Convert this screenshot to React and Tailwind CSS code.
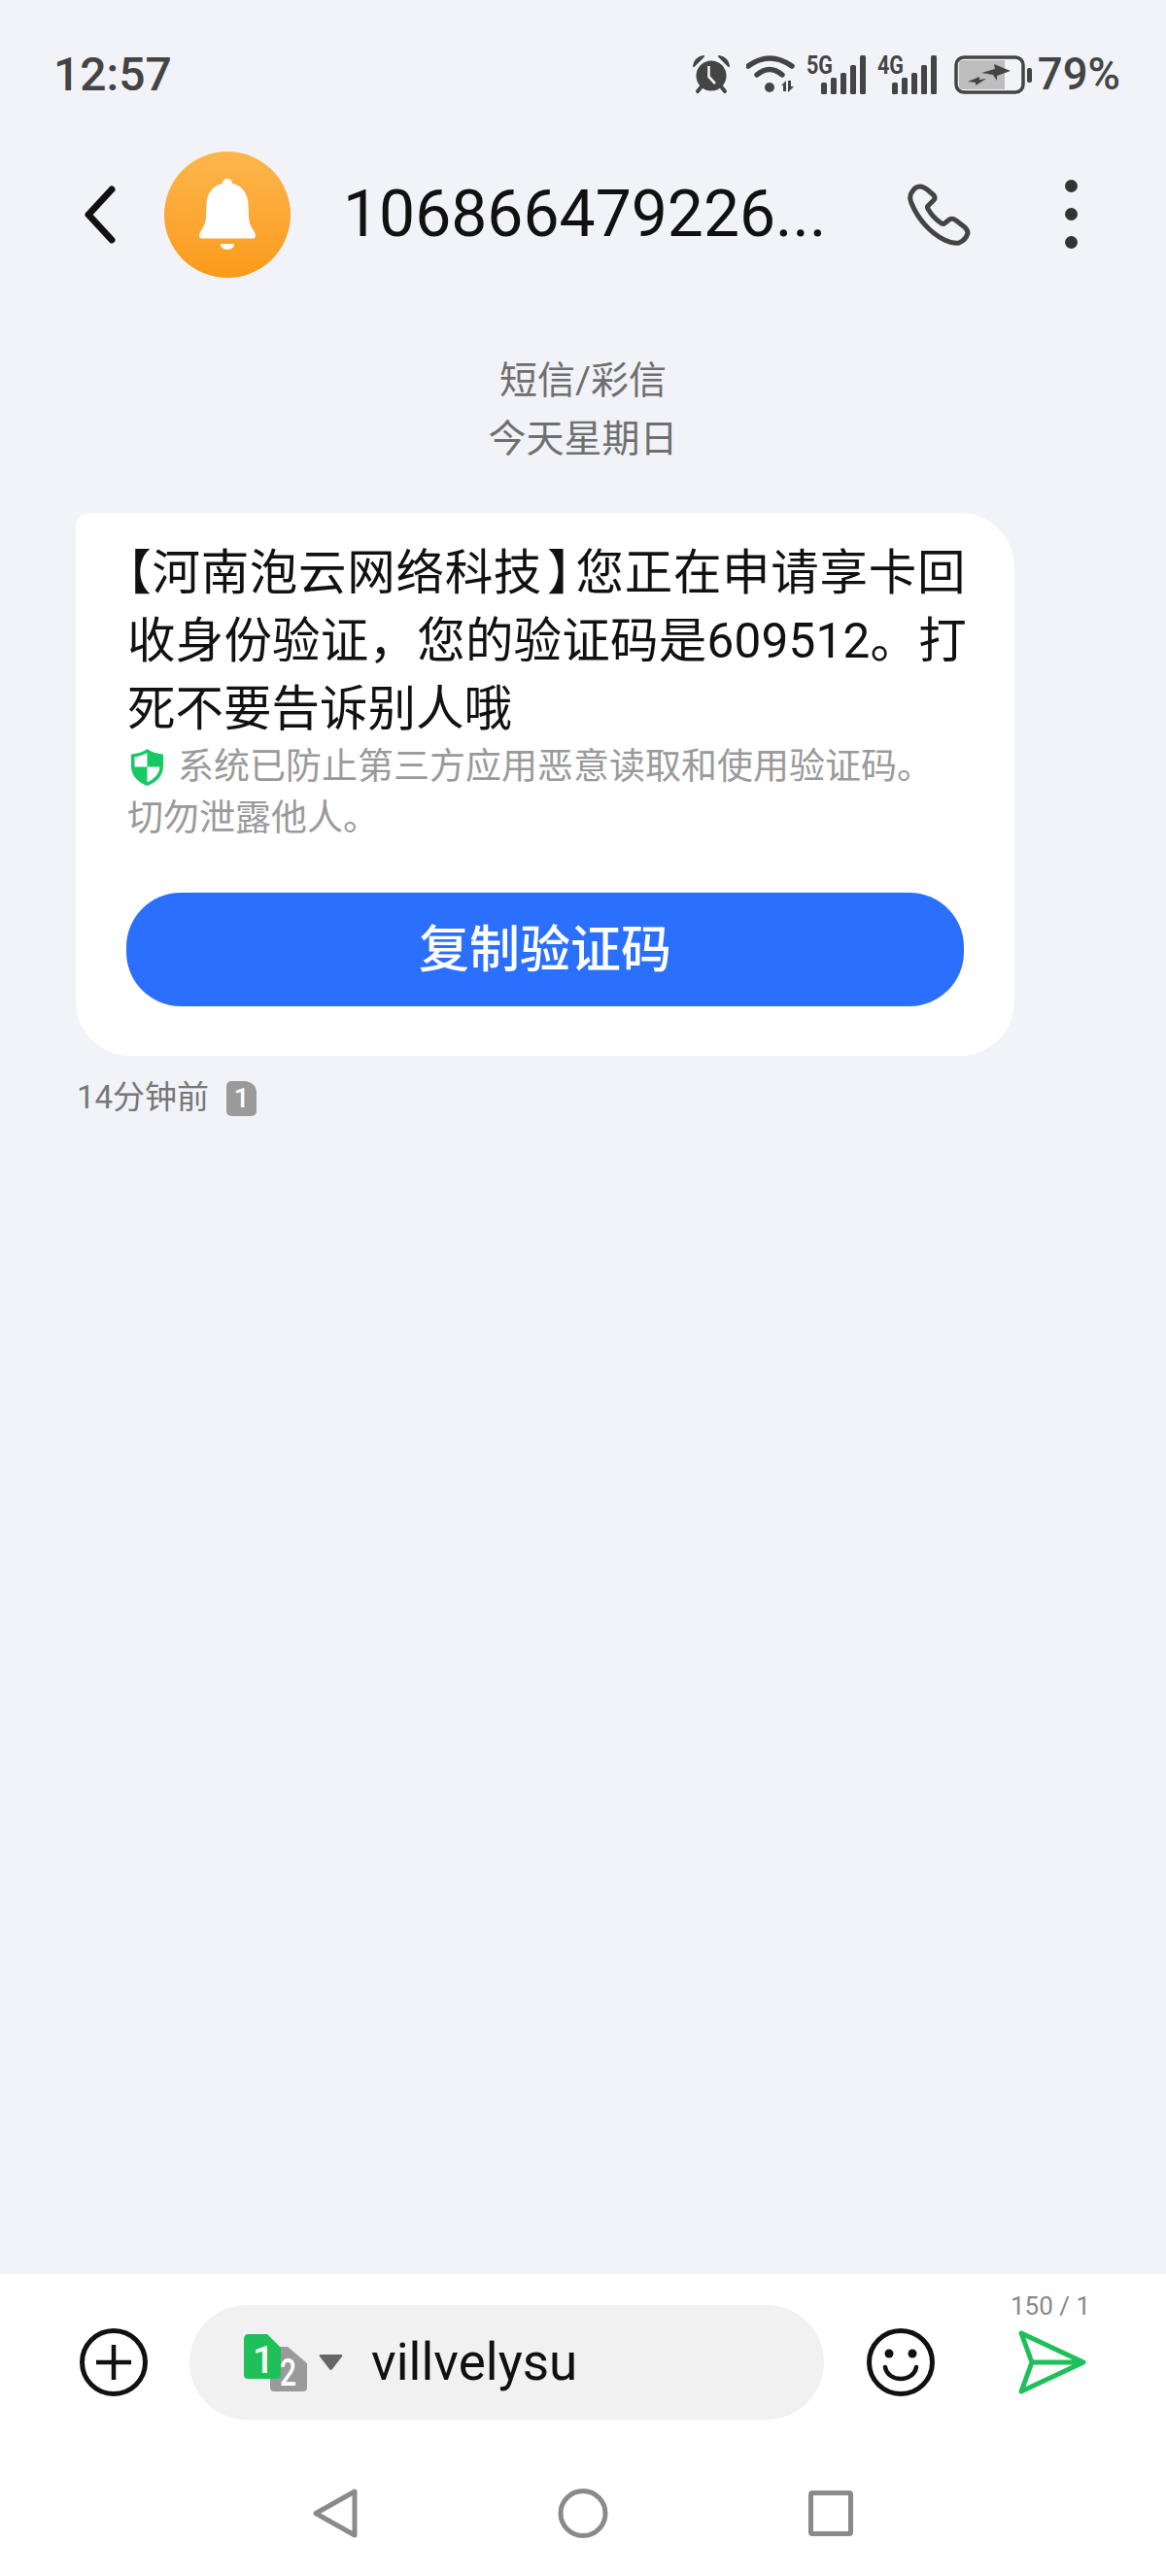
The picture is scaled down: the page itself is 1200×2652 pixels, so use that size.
import React from "react";

const cjk = "font-['Roboto','Noto_Sans_CJK_SC',sans-serif]";

function AlarmIcon() {
  return (
    <svg width="40" height="40" viewBox="0 0 40 40">
      <path d="M2 11 C3 5 7 2 12 1 Z M38 11 C37 5 33 2 28 1 Z" fill="#444" stroke="#444" strokeWidth="2" strokeLinejoin="round" />
      <circle cx="20" cy="21" r="15.5" fill="#444" />
      <path d="M6 37 L10 32 M34 37 L30 32" stroke="#444" strokeWidth="4" strokeLinecap="round" />
      <path d="M17.5 11 V22 L24 29" fill="none" stroke="#f1f3f8" strokeWidth="2.6" />
    </svg>
  );
}

function WifiIcon() {
  return (
    <svg width="51" height="40" viewBox="0 0 51 40">
      <path d="M2 11 Q24 -5 47 11" fill="none" stroke="#444" strokeWidth="5.5" strokeLinecap="round" />
      <path d="M11 20 Q24 9 37 20" fill="none" stroke="#444" strokeWidth="5.5" strokeLinecap="round" />
      <circle cx="24" cy="33" r="5" fill="#444" />
      <path d="M41 26 V37 H38 V31 H36 Z M43 26 H46 V32 H49 L43 38 Z" fill="#444" />
    </svg>
  );
}

function SignalIcon({ label }) {
  return (
    <svg width="62" height="40" viewBox="0 0 62 40" className="overflow-visible">
      <text x="0" y="19" fontFamily="Roboto" fontWeight="700" fontSize="26" fill="#444" textLength="27" lengthAdjust="spacingAndGlyphs">
        {label}
      </text>
      {[[15, 28], [25, 23], [35, 18], [45, 10], [55, 0]].map(([x, y]) => (
        <rect key={x} x={x} y={y} width="6" height={40 - y} rx="1.5" fill="#444" />
      ))}
    </svg>
  );
}

function BatteryIcon() {
  return (
    <svg width="80" height="40" viewBox="0 0 80 40">
      <path d="M8 5 H52 V35 H8 Q5 35 5 32 V8 Q5 5 8 5 Z" fill="#bdbdbd" />
      <rect x="2" y="2" width="69" height="36" rx="8" fill="none" stroke="#444" strokeWidth="3.5" />
      <rect x="75" y="13" width="5" height="15" rx="2" fill="#444" />
      <path d="M14 27 L26 22 L26 25 L33 24 L22 31 L22 28 Z" fill="#444" />
      <path d="M28 18 L42 14 L41 9 L58 16 L44 21 L44 26 L40 20 Z" fill="#444" />
    </svg>
  );
}

function BellIcon() {
  return (
    <svg width="58" height="73" viewBox="0 0 58 73">
      <path d="M29 0 C32 0 34 2 34 5 C44 7 50 15 50.5 26 L51 38 C51 46 54 50 57 55 C58.5 58 58 61.5 56 61.5 H2 C0 61.5 -0.5 58 1 55 C4 50 7 46 7 38 L7.5 26 C8 15 14 7 24 5 C24 2 26 0 29 0 Z" fill="#fff" />
      <path d="M22 67 H36 C36 71 33 73 29 73 C25 73 22 71 22 67 Z" fill="#fff" />
    </svg>
  );
}

function PhoneIcon() {
  return (
    <svg width="66" height="66" viewBox="0 0 66 66">
      <path
        d="M13 4 Q8 4 5 9 Q1 14 4 21 C10 36 22 51 38 59 Q46 63 53 62 Q60 59 62 52 Q62 49 59 46 L50 39 Q46 36 43 38 L38 42 Q37 43 35 42 Q26 36 21 27 Q20 25 21 24 L27 18 Q29 16 27 13 L20 7 Q16 4 13 4 Z"
        fill="none"
        stroke="#444"
        strokeWidth="5"
        strokeLinejoin="round"
      />
    </svg>
  );
}

function ShieldIcon() {
  return (
    <svg width="33" height="38" viewBox="0 0 33 38" className="inline-block ml-[4px] mr-[15px] align-[-7px]">
      <path d="M16.5 0 C20 3 27 5 33 5.5 V18 C33 28 25 35 16.5 38 C8 35 0 28 0 18 V5.5 C6 5 13 3 16.5 0 Z" fill="#17c964" />
      <path d="M16.5 4 C13 6 8 8 3.5 8.5 V18.5 H16.5 Z M16.5 18.5 H29.5 C29 26 23 31.5 16.5 34.5 Z" fill="#fff" />
    </svg>
  );
}

function SimIcon() {
  return (
    <svg width="65" height="59" viewBox="0 0 65 59" className="overflow-visible">
      <path d="M30 13 H45 L65 30 V55 Q65 59 61 59 H31 Q27 59 27 55 V17 Z" fill="#9a9a9a" />
      <path d="M5 0 H24 L38 14 V42 Q38 46 34 46 H4 Q0 46 0 42 V5 Q0 0 5 0 Z" fill="#1fbf5a" />
      <text x="9" y="40" fontFamily="Roboto" fontWeight="500" fontSize="39" fill="#fff">1</text>
      <text x="37" y="53" fontFamily="Roboto" fontWeight="500" fontSize="38" fill="#fff" textLength="17" lengthAdjust="spacingAndGlyphs">2</text>
    </svg>
  );
}

export default function App() {
  return (
    <div className={`w-[1200px] h-[2652px] flex flex-col bg-[#f1f3f8] ${cjk}`}>
      {/* Status bar */}
      <div className="flex items-center justify-between h-[44px] mt-[55px] pl-[55px] pr-[47px]">
        <span className="text-[48px] font-medium leading-none text-[#444]">12:57</span>
        <div className="flex items-center">
          <AlarmIcon />
          <div className="ml-[16px]"><WifiIcon /></div>
          <div className="ml-[11px]"><SignalIcon label="5G" /></div>
          <div className="ml-[11px]"><SignalIcon label="4G" /></div>
          <div className="ml-[17px]"><BatteryIcon /></div>
          <span className="ml-[6px] text-[45.5px] font-medium leading-none text-[#444]">79%</span>
        </div>
      </div>

      {/* Header */}
      <div className="flex items-center h-[131px] mt-[56px] pl-[86px]">
        <svg width="33" height="60" viewBox="0 0 33 60">
          <path d="M29 4 L5 30 L29 56" fill="none" stroke="#111" strokeWidth="7" strokeLinecap="round" strokeLinejoin="round" />
        </svg>
        <div className="ml-[50px] w-[130px] h-[130px] rounded-full bg-gradient-to-b from-[#fdb64a] to-[#fb9a17] flex items-center justify-center">
          <BellIcon />
        </div>
        <span className="ml-[54px] w-[581px] text-[66px] leading-none text-[#111]">106866479226...</span>
        <PhoneIcon />
        <div className="ml-[96px] flex flex-col gap-[16px]">
          <div className="w-[13px] h-[13px] rounded-full bg-[#333]" />
          <div className="w-[13px] h-[13px] rounded-full bg-[#333]" />
          <div className="w-[13px] h-[13px] rounded-full bg-[#333]" />
        </div>
      </div>

      {/* Date labels */}
      <div className="mt-[76px] flex flex-col items-center text-[39px] leading-[60px] text-[#6f6f6f]">
        <span>短信/彩信</span>
        <span>今天星期日</span>
      </div>

      {/* Message bubble */}
      <div className="mt-[46px] ml-[78px] w-[966px] bg-white rounded-[56px] rounded-tl-[14px] pt-[27px] pb-[51px] pl-[53px]">
        <div className="text-[49.5px] leading-[70px] text-[#111] whitespace-nowrap">
          <span className="tracking-[0.7px]">
            <span className="[font-feature-settings:'halt']">【</span>
            河南泡云网络科技
            <span className="[font-feature-settings:'halt'] ml-[5px] mr-[4px]">】</span>
            您正在申请享卡回
          </span>
          <br />
          <span className="tracking-[0.2px]">收身份验证，您的验证码是609512。打</span>
          <br />
          死不要告诉别人哦
        </div>
        <div className="-mt-[2px] text-[37px] leading-[53px] text-[#9a9a9a] whitespace-nowrap">
          <ShieldIcon />
          系统已防止第三方应用恶意读取和使用验证码。
          <br />
          切勿泄露他人。
        </div>
        <button className="mt-[50px] -ml-[1px] w-[862px] h-[117px] pt-[2px] rounded-[56px] bg-[#2b6fff] text-white text-[52px] font-medium">
          复制验证码
        </button>
      </div>

      {/* Time */}
      <div className="mt-[21px] ml-[79px] flex items-center h-[44px]">
        <span className="text-[33px] leading-[44px] text-[#777]">14分钟前</span>
        <div className="ml-[18px] mt-[2px] w-[31px] h-[36px] rounded-[5px] rounded-tr-[12px] bg-[#9a9a9a] flex items-center justify-center text-white text-[28px] font-medium leading-none">
          1
        </div>
      </div>

      <div className="flex-1" />

      {/* Input bar and navigation */}
      <div className="bg-white h-[311px] shrink-0 flex flex-col">
        <div className="mt-[32px] flex items-center pl-[82px] relative">
          <svg width="70" height="70" viewBox="0 0 70 70">
            <circle cx="35" cy="35" r="32.5" fill="none" stroke="#111" strokeWidth="5" />
            <path d="M35 17 V53 M17 35 H53" stroke="#111" strokeWidth="4.5" />
          </svg>
          <div className="ml-[43px] w-[653px] h-[118px] rounded-[59px] bg-[#f1f1f1] flex items-center pl-[56px]">
            <SimIcon />
            <svg width="25" height="18" viewBox="0 0 25 18" className="ml-[12px]">
              <path d="M2 1 H23 Q25 1 24 3 L14 16 Q12.5 18 11 16 L1 3 Q0 1 2 1 Z" fill="#666" />
            </svg>
            <span className="ml-[29px] text-[53px] leading-none text-[#111]">villvelysu</span>
          </div>
          <svg width="70" height="70" viewBox="0 0 70 70" className="ml-[44px]">
            <circle cx="35" cy="35" r="32.5" fill="none" stroke="#111" strokeWidth="5" />
            <circle cx="23" cy="26" r="4.5" fill="#111" />
            <circle cx="47" cy="26" r="4.5" fill="#111" />
            <path d="M19 40 C22 56 48 56 51 40" fill="none" stroke="#111" strokeWidth="4.5" strokeLinecap="round" />
          </svg>
          <svg width="70" height="66" viewBox="0 0 70 66" className="ml-[86px]">
            <path d="M3 3 L67 33 L3 63 L14 33 Z M14 33 H67" fill="none" stroke="#1fbf5a" strokeWidth="5" strokeLinejoin="round" />
          </svg>
          <span className="absolute right-[78px] -top-[12px] text-[26px] leading-none text-[#888]">150 / 1</span>
        </div>

        <div className="mt-[71px] flex items-center justify-center gap-[206px]">
          <svg width="46" height="51" viewBox="0 0 46 51">
            <path d="M43 3 V48 L3 25.5 Z" fill="none" stroke="#8a8a8a" strokeWidth="5" strokeLinejoin="round" />
          </svg>
          <svg width="52" height="51" viewBox="0 0 52 51">
            <circle cx="26" cy="25.5" r="23" fill="none" stroke="#8a8a8a" strokeWidth="5" />
          </svg>
          <svg width="46" height="47" viewBox="0 0 46 47">
            <rect x="2.5" y="2.5" width="41" height="42" rx="1.5" fill="none" stroke="#8a8a8a" strokeWidth="5" />
          </svg>
        </div>
      </div>
    </div>
  );
}
